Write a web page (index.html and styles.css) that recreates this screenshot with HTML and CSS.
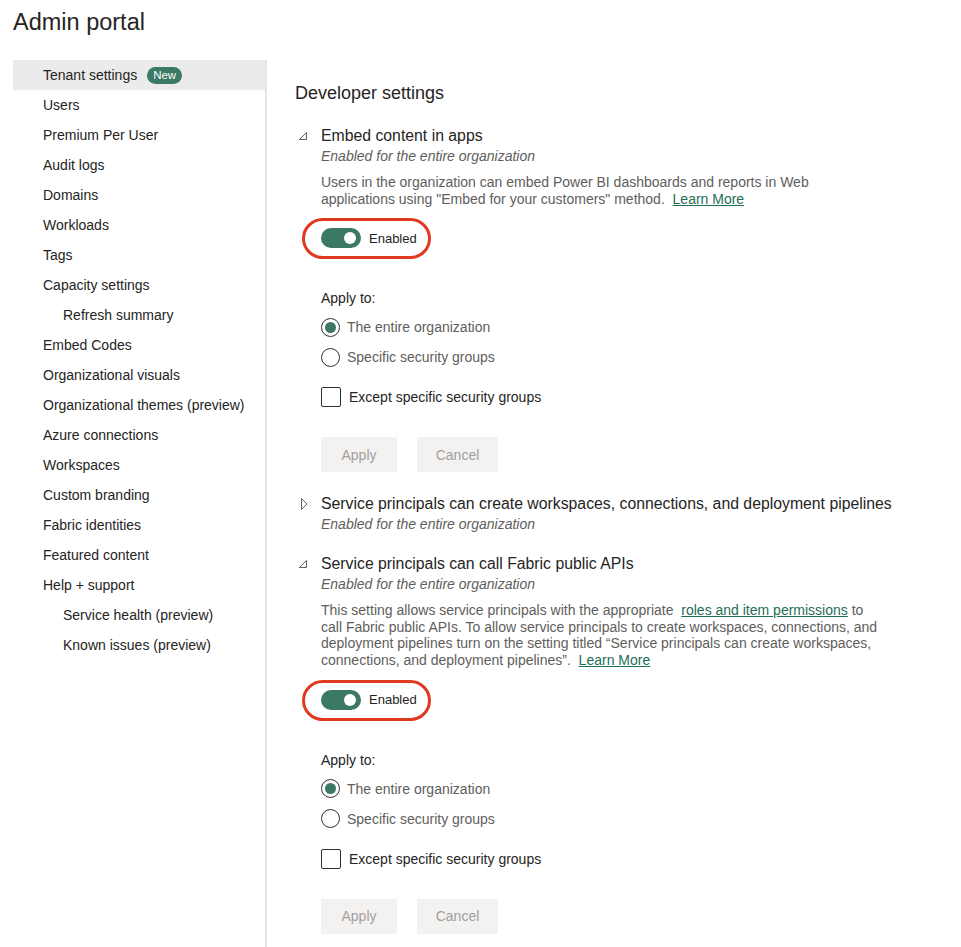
FILE: index.html
```html
<!DOCTYPE html>
<html lang="en">
<head>
  <meta charset="UTF-8">
  <meta name="viewport" content="width=device-width, initial-scale=1.0">
  <title>Admin portal</title>
  <link rel="stylesheet" href="styles.css">
</head>
<body>
  <h1 class="page-title">Admin portal</h1>
  <div class="layout">
    <nav class="sidebar">
      <a class="nav-item active">Tenant settings <span class="badge">New</span></a>
      <a class="nav-item">Users</a>
      <a class="nav-item">Premium Per User</a>
      <a class="nav-item">Audit logs</a>
      <a class="nav-item">Domains</a>
      <a class="nav-item">Workloads</a>
      <a class="nav-item">Tags</a>
      <a class="nav-item">Capacity settings</a>
      <a class="nav-item sub">Refresh summary</a>
      <a class="nav-item">Embed Codes</a>
      <a class="nav-item">Organizational visuals</a>
      <a class="nav-item">Organizational themes (preview)</a>
      <a class="nav-item">Azure connections</a>
      <a class="nav-item">Workspaces</a>
      <a class="nav-item">Custom branding</a>
      <a class="nav-item">Fabric identities</a>
      <a class="nav-item">Featured content</a>
      <a class="nav-item">Help + support</a>
      <a class="nav-item sub">Service health (preview)</a>
      <a class="nav-item sub">Known issues (preview)</a>
    </nav>

    <main class="content">
      <h2 class="group-title">Developer settings</h2>

      <section class="setting">
        <svg class="caret" width="14" height="18" viewBox="0 0 14 18"><path d="M11.5 6.5 V13.5 H4.5 Z" fill="none" stroke="#605e5c" stroke-width="1"/></svg>
        <div class="setting-body">
          <div class="setting-name">Embed content in apps</div>
          <div class="setting-state">Enabled for the entire organization</div>
          <p class="setting-desc">Users in the organization can embed Power BI dashboards and reports in Web<br>applications using "Embed for your customers" method.&nbsp; <a class="link">Learn More</a></p>
          <div class="toggle-row">
            <span class="toggle"><span class="knob"></span></span>
            <span class="toggle-label">Enabled</span>
          </div>
          <div class="apply-label">Apply to:</div>
          <label class="radio-row"><span class="radio checked"></span>The entire organization</label>
          <label class="radio-row"><span class="radio"></span>Specific security groups</label>
          <label class="check-row"><span class="checkbox"></span>Except specific security groups</label>
          <div class="actions">
            <button class="btn btn-apply" disabled>Apply</button>
            <button class="btn btn-cancel" disabled>Cancel</button>
          </div>
        </div>
      </section>

      <section class="setting closed">
        <svg class="caret" width="14" height="18" viewBox="0 0 14 18"><path d="M6.5 4.5 L12 10 L6.5 15.5 Z" fill="none" stroke="#605e5c" stroke-width="1"/></svg>
        <div class="setting-body">
          <div class="setting-name">Service principals can create workspaces, connections, and deployment pipelines</div>
          <div class="setting-state">Enabled for the entire organization</div>
        </div>
      </section>

      <section class="setting">
        <svg class="caret" width="14" height="18" viewBox="0 0 14 18"><path d="M11.5 6.5 V13.5 H4.5 Z" fill="none" stroke="#605e5c" stroke-width="1"/></svg>
        <div class="setting-body">
          <div class="setting-name">Service principals can call Fabric public APIs</div>
          <div class="setting-state">Enabled for the entire organization</div>
          <p class="setting-desc">This setting allows service principals with the appropriate&nbsp; <a class="link">roles and item permissions</a> to<br>call Fabric public APIs. To allow service principals to create workspaces, connections, and<br>deployment pipelines turn on the setting titled “Service principals can create workspaces,<br>connections, and deployment pipelines”.&nbsp; <a class="link">Learn More</a></p>
          <div class="toggle-row">
            <span class="toggle"><span class="knob"></span></span>
            <span class="toggle-label">Enabled</span>
          </div>
          <div class="apply-label">Apply to:</div>
          <label class="radio-row"><span class="radio checked"></span>The entire organization</label>
          <label class="radio-row"><span class="radio"></span>Specific security groups</label>
          <label class="check-row"><span class="checkbox"></span>Except specific security groups</label>
          <div class="actions">
            <button class="btn btn-apply" disabled>Apply</button>
            <button class="btn btn-cancel" disabled>Cancel</button>
          </div>
        </div>
      </section>
    </main>
  </div>
</body>
</html>
```

FILE: styles.css
```css
body {
  font-family: "Liberation Sans", Arial, sans-serif;
  color: #252423;
  background: #fff;
  margin: 0;
  padding: 0;
  overflow: hidden;
}
.page-title {
  font-size: 23.5px;
  font-weight: normal;
  line-height: 32px;
  margin: 0;
  padding: 6px 13px 22px;
}
.layout {
  display: flex;
  height: calc(100vh - 60px);
}
.sidebar {
  width: 252px;
  margin-left: 13px;
  border-right: 2px solid #e6e5e4;
  display: flex;
  flex-direction: column;
}
.nav-item {
  display: flex;
  align-items: center;
  height: 30px;
  padding-left: 30px;
  font-size: 14px;
}
.nav-item.sub {
  padding-left: 50px;
}
.nav-item.active {
  background: #ebebeb;
}
.badge {
  margin-left: 10px;
  background: #3b7865;
  color: #fff;
  font-size: 11.5px;
  line-height: 17px;
  padding: 0 6px;
  border-radius: 9px;
}
.content {
  flex: 1;
  padding-left: 28px;
}
.group-title {
  font-size: 18px;
  font-weight: normal;
  line-height: 24px;
  margin: 21px 0 20px;
}
.setting {
  display: flex;
  margin-bottom: 21px;
}
.setting.closed {
  margin-bottom: 19px;
}
.caret {
  flex: none;
  margin-top: 1px;
  margin-right: 12px;
}
.setting-body {
  flex: 1;
  white-space: nowrap;
}
.setting-name {
  font-size: 15.8px;
  line-height: 20px;
  padding-top: 1px;
}
.setting-state {
  font-size: 14px;
  font-style: italic;
  line-height: 20px;
  color: #605e5c;
}
.setting-desc {
  font-size: 14px;
  line-height: 16.6px;
  color: #605e5c;
  margin: 8px 0 0;
}
.link {
  color: #1f6e56;
  text-decoration: underline;
}
.toggle-row {
  position: relative;
  display: flex;
  width: fit-content;
  align-items: center;
  margin-top: 21px;
  height: 20px;
}
/* red highlight ring drawn around the switch */
.toggle-row::before {
  content: "";
  position: absolute;
  left: -19px;
  right: -14px;
  top: -10px;
  bottom: -11px;
  border: 3px solid #e0391f;
  border-radius: 22px;
}
.toggle {
  position: relative;
  width: 40px;
  height: 20px;
  border-radius: 10px;
  background: #3b7865;
}
.knob {
  position: absolute;
  right: 5px;
  top: 4px;
  width: 12px;
  height: 12px;
  border-radius: 50%;
  background: #fff;
}
.toggle-label {
  margin-left: 8px;
  font-size: 13px;
}
.apply-label {
  font-size: 14px;
  line-height: 20px;
  margin-top: 40px;
  margin-bottom: 4px;
}
.radio-row,
.check-row {
  display: flex;
  align-items: center;
  height: 30px;
  font-size: 14px;
  color: #605e5c;
}
.radio {
  box-sizing: border-box;
  width: 19px;
  height: 19px;
  border: 1px solid #323130;
  border-radius: 50%;
  margin-right: 7px;
  display: flex;
  align-items: center;
  justify-content: center;
}
.radio.checked::after {
  content: "";
  width: 11px;
  height: 11px;
  border-radius: 50%;
  background: #3b7865;
}
.check-row {
  margin-top: 10px;
  color: #252423;
}
.checkbox {
  box-sizing: border-box;
  width: 20px;
  height: 20px;
  border: 1px solid #323130;
  border-radius: 2px;
  margin-right: 8px;
}
.actions {
  display: flex;
  gap: 20px;
  margin-top: 25px;
}
.btn {
  height: 35px;
  border: none;
  background: #f3f2f1;
  color: #a19f9d;
  font-family: inherit;
  font-size: 14px;
  padding: 0;
}
.btn-apply {
  width: 76px;
}
.btn-cancel {
  width: 81px;
}
```
